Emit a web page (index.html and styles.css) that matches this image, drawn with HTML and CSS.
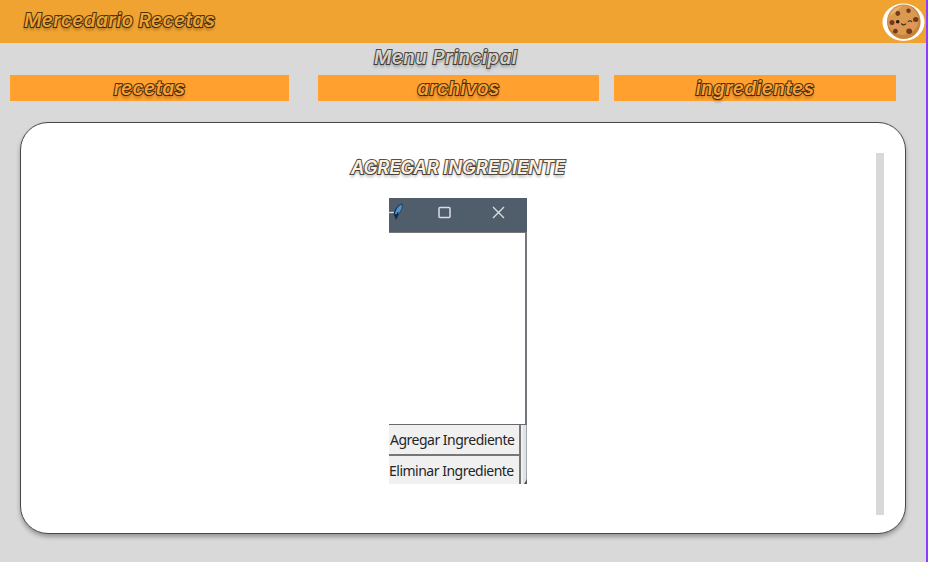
FILE: index.html
```html
<!DOCTYPE html>
<html lang="es">
<head>
<meta charset="utf-8">
<title>Mercedario Recetas</title>
<link rel="stylesheet" href="styles.css">
</head>
<body>
<div class="app">
  <header class="topbar">
    <h1 class="title brand">Mercedario Recetas</h1>
    <svg class="cookie" width="43" height="40" viewBox="0 0 43 40">
      <ellipse cx="21.5" cy="21.2" rx="21" ry="18.7" fill="#fff"/>
      <ellipse cx="21.8" cy="20.8" rx="16.8" ry="17.3" fill="#c98439"/>
      <ellipse cx="21" cy="19" rx="15.5" ry="15" fill="#d99a50"/>
      <path d="M8 15Q11 6 20 5Q14 11 8 15" fill="#e8b273"/>
      <g fill="#74391f"><circle cx="15.8" cy="12.500" r="2.400"/><circle cx="26.500" cy="9.800" r="2.200"/><circle cx="10" cy="21.500" r="2.500"/><ellipse cx="33.700" cy="18.500" rx="2.700" ry="2.500"/><circle cx="13.400" cy="30.200" r="2.400"/><ellipse cx="27.200" cy="30.200" rx="2.900" ry="2.700"/></g>
      <circle cx="15.700" cy="20.800" r="1.800" fill="#251817"/>
      <path d="M26 21q2-2.500 4 0M19.300 22.500q2.400 2.700 4.700.2" fill="none" stroke="#482719" stroke-width="1.200"/>
      <ellipse cx="14.300" cy="24.600" rx="2.300" ry="1.400" fill="#fa8584"/><ellipse cx="29.300" cy="23.700" rx="2.300" ry="1.400" fill="#fa8584"/>
    </svg>
  </header>
  <h2 class="title menu-title">Menu Principal</h2>
  <nav class="menu">
    <a class="title tab recetas">recetas</a>
    <a class="title tab archivos">archivos</a>
    <a class="title tab ingredientes">ingredientes</a>
  </nav>
  <main class="panel">
    <section class="content">
      <h3 class="title heading">AGREGAR INGREDIENTE</h3>
      <div class="window">
        <div class="window-bar">
          <svg width="138" height="34" viewBox="0 0 138 34">
            <path d="M0 14.500h5" stroke="#d9dee3" stroke-width="1.300"/>
            <path d="M7 22L4.500 16Q6 8 13 5.500Q15 10 10 16Z" fill="#17304f"/>
            <path d="M6 16Q7 9 12.500 6.500Q14 11 9 16Z" fill="#4e8fd5"/>
            <path d="M7 20L9 14" stroke="#122237"/>
            <rect x="50" y="9.500" width="11" height="10" rx="1" fill="none" stroke="#d9dee3" stroke-width="1.500"/>
            <path d="M104 9l11 11M115 9l-11 11" stroke="#d9dee3" stroke-width="1.400"/>
          </svg>
        </div>
        <div class="list"></div>
        <div class="actions">
          <div class="buttons">
            <div class="button add">Agregar Ingrediente</div>
            <div class="button remove">Eliminar Ingrediente</div>
          </div>
          <svg class="edge" width="6" height="59" viewBox="0 0 6 59"><path d="M3.500 0v59" stroke="#dce3e9" stroke-width="3"/><path d="M5.500 0v59" stroke="#a3a9ae"/><path d="M6 54v5H3Z" fill="#555"/></svg>
        </div>
      </div>
    </section>
    <div class="scrollbar"></div>
  </main>
</div>
</body>
</html>
```
FILE: styles.css
```css
* { box-sizing: border-box; }
body { margin: 0; background: #d9d9d9; overflow: hidden; }
.app { height: 562px; border-right: 2px solid #8b3dff; background: #d9d9d9; }
.title {
  margin: 0;
  font: italic 600 19px/28px Inter, "Open Sans", sans-serif;
  letter-spacing: .35px;
  white-space: nowrap;
  color: #f0a330;
  -webkit-text-stroke: 2px #4d3512;
  paint-order: stroke fill;
  text-shadow: 0 3px 3px rgba(0, 0, 0, .3);
}
.topbar { height: 43px; padding: 1px 1px 0 24px; display: flex; justify-content: space-between; background: #f0a330; }
.brand { margin-top: 6px; }
.cookie { display: block; }
.menu-title { height: 32px; padding: 1px 0 0 374px; color: #d8d1c7; -webkit-text-stroke-color: #4d4a46; }
.menu { display: flex; height: 26px; padding-left: 10px; }
.tab { height: 26px; background: #ffa02f; color: #ffa02f; text-align: center; }
.recetas { width: 279px; margin-right: 29px; }
.archivos { width: 281px; margin-right: 15px; }
.ingredientes { width: 282px; }
.panel { display: flex; margin: 21px 0 0 20px; width: 886px; height: 412px; padding: 30px 21px 0 0; border: 1px solid #484848; border-radius: 28px; background: #fff; box-shadow: 0 3px 4px rgba(0, 0, 0, .3); }
.content { flex: 1; padding-left: 330px; }
.heading { color: #fff1df; -webkit-text-stroke-color: #55514d; letter-spacing: -.15px; font-size: 18.5px; }
.window { width: 138px; height: 286px; margin: 17px 0 0 38px; background: #fff; }
.window-bar { height: 35px; background: #505d6b; border-bottom: 1px solid #777; }
.window-bar svg { display: block; }
.list { height: 192px; border-right: 2px solid #73777b; border-bottom: 1px solid #696969; }
.actions { display: flex; height: 59px; background: #f0f0f0; }
.buttons { width: 132px; }
.button { height: 31px; padding-left: 1px; border-right: 2px solid #777; border-bottom: 2px solid #777; font: 14px/30px "Noto Sans", sans-serif; color: #252525; white-space: nowrap; letter-spacing: -.5px; }
.remove { height: 28px; padding-left: 0; border-bottom: 0; }
.edge { display: block; }
.scrollbar { width: 8px; height: 362px; background: #d9d9d9; }
```
